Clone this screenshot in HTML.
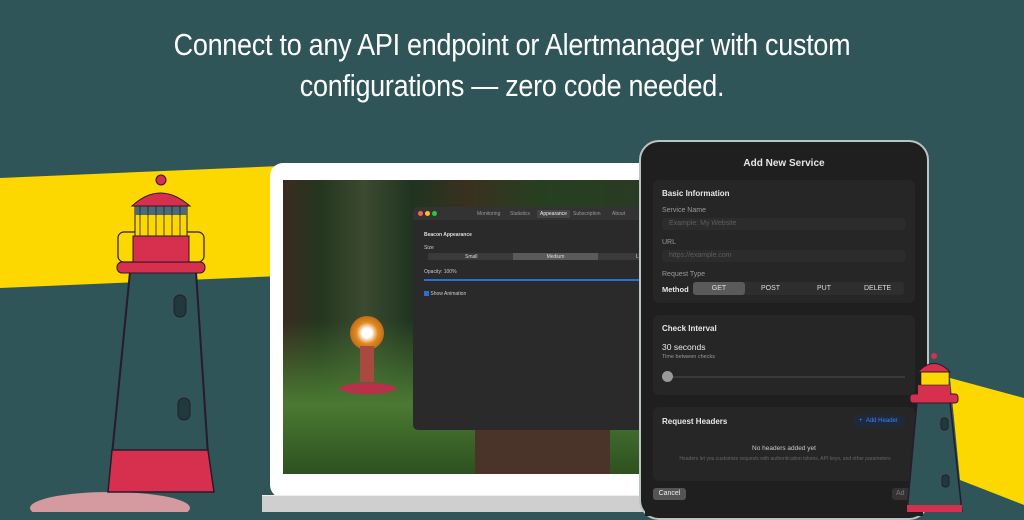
<!DOCTYPE html>
<html><head><meta charset="utf-8"><style>
*{margin:0;padding:0;box-sizing:border-box}
body{width:1024px;height:512px;overflow:hidden;background:#2f5559;font-family:"Liberation Sans",sans-serif;position:relative}
.abs{position:absolute}
.h{position:absolute;left:0;width:1024px;text-align:center;color:#fff;font-size:31px;font-weight:300;transform:scaleX(0.87);transform-origin:512px 0;letter-spacing:-0.3px}
.lbl{font-size:7px;color:#9a9a9a}
.field{background:#2c2c2c;border-radius:3px;height:12px;font-size:7px;color:#5e5e5e;padding:2px 7px}
.sec{background:#262626;border-radius:6px;position:absolute;left:653px;width:262px}
.b{font-weight:bold;color:#e8e8e8;font-size:8px}
</style></head><body>
<div class="h" style="top:27px">Connect to any API endpoint or Alertmanager with custom</div>
<div class="h" style="top:68px">configurations — zero code needed.</div>

<svg class="abs" style="left:0;top:0" width="1024" height="512">
<polygon points="0,178 280,166 280,276 0,288" fill="#fcd800"/>
<polygon points="950,378 1024,398 1024,505 960,480" fill="#fcd800"/>
<!-- left lighthouse -->
<ellipse cx="110" cy="508" rx="80" ry="16" fill="#d49aa0"/>
<polygon points="130,272 196,272 208,455 112,455" fill="#2f5559" stroke="#2a1a2a" stroke-width="2"/>
<polygon points="112,450 208,450 214,492 108,492" fill="#d6304e" stroke="#2a1a2a" stroke-width="1.5"/>
<rect x="117" y="262" width="88" height="11" rx="5" fill="#d6304e" stroke="#2a1a2a"/>
<rect x="118" y="232" width="86" height="30" rx="6" fill="none" stroke="#2a1a2a" stroke-width="1.2"/>
<rect x="133" y="236" width="56" height="26" fill="#d6304e" stroke="#2a1a2a"/>
<rect x="135" y="206" width="52" height="30" fill="#fcd800" stroke="#2a1a2a"/>
<rect x="135" y="206" width="52" height="9" fill="#4a6a78"/>
<path d="M140 206v30M148 206v30M156 206v30M164 206v30M172 206v30M180 206v30" stroke="#2a1a2a" stroke-width="0.8"/>
<path d="M132 206 Q160 180 190 206Z" fill="#d6304e" stroke="#2a1a2a"/>
<circle cx="161" cy="180" r="5" fill="#d6304e" stroke="#2a1a2a"/>
<rect x="174" y="295" width="12" height="22" rx="6" fill="#1e3a3c" stroke="#2a1a2a"/>
<rect x="178" y="398" width="12" height="22" rx="6" fill="#1e3a3c" stroke="#2a1a2a"/>
</svg>

<!-- laptop -->
<div class="abs" style="left:270px;top:163px;width:390px;height:335px;background:#fff;border-radius:13px"></div>
<div class="abs" style="left:262px;top:495px;width:400px;height:17px;background:#cfcfcf;border-top:1px solid #eee"></div>
<div class="abs" style="left:283px;top:180px;width:370px;height:294px;background:linear-gradient(90deg,#3a2a20 0%,#24361f 10%,#3b4a30 22%,#1f3420 35%,#3a3020 50%,#26401f 70%,#2a3a25 100%)"></div>
<div class="abs" style="left:283px;top:320px;width:370px;height:154px;background:linear-gradient(180deg,rgba(60,90,40,0),#4a7a32 55%,#2e5020)"></div>
<div class="abs" style="left:475px;top:430px;width:135px;height:44px;background:#4a3328"></div>
<div class="abs" style="left:350px;top:316px;width:34px;height:34px;border-radius:50%;background:radial-gradient(circle,#fff 20%,#e08a20 45%,#a04a10 100%)"></div>
<div class="abs" style="left:360px;top:346px;width:14px;height:36px;background:#a84a40"></div>
<div class="abs" style="left:340px;top:383px;width:56px;height:11px;border-radius:50%;background:#b8304a"></div>
<!-- settings window -->
<div class="abs" style="left:413px;top:207px;width:240px;height:223px;background:#2a2a2a;border-radius:5px 0 0 5px;overflow:hidden">
 <div style="height:13px;background:#333;position:relative;font-size:5px;color:#999">
  <span class="abs" style="left:5px;top:4px;width:5px;height:5px;border-radius:50%;background:#ff5f57"></span>
  <span class="abs" style="left:12px;top:4px;width:5px;height:5px;border-radius:50%;background:#febc2e"></span>
  <span class="abs" style="left:19px;top:4px;width:5px;height:5px;border-radius:50%;background:#28c840"></span>
  <span class="abs" style="left:64px;top:4px">Monitoring</span><span class="abs" style="left:97px;top:4px">Statistics</span>
  <span class="abs" style="left:124px;top:3px;background:#444;color:#eee;padding:1px 3px">Appearance</span>
  <span class="abs" style="left:160px;top:4px">Subscription</span><span class="abs" style="left:199px;top:4px">About</span>
 </div>
 <div class="abs" style="left:11px;top:25px;font-size:5px;color:#ddd;font-weight:bold">Beacon Appearance</div>
 <div class="abs" style="left:11px;top:38px;font-size:5px;color:#ccc">Size</div>
 <div class="abs" style="left:15px;top:46px;width:230px;height:7px;background:#3a3a3a;font-size:5px;color:#ddd">
  <span class="abs" style="left:37px;top:1px">Small</span>
  <span class="abs" style="left:85px;top:0;width:85px;height:7px;background:#5a5a5a;text-align:center;padding-top:1px">Medium</span>
  <span class="abs" style="left:208px;top:1px">Large</span></div>
 <div class="abs" style="left:11px;top:62px;font-size:5px;color:#ccc">Opacity: 100%</div>
 <div class="abs" style="left:11px;top:72px;width:230px;height:2px;background:#2a6fd6"></div>
 <div class="abs" style="left:11px;top:84px;font-size:5px;color:#ccc"><span style="display:inline-block;width:5px;height:5px;background:#2a6fd6;vertical-align:-1px"></span> Show Animation</div>
</div>

<!-- right panel -->
<div class="abs" style="left:639px;top:140px;width:290px;height:380px;border:2px solid #b9c4c4;border-radius:20px;background:#1e1e1e"></div>
<div class="abs" style="left:645px;top:146px;width:278px;height:370px;background:#1f1f1f;border-radius:14px 14px 0 0"></div>
<div class="abs" style="left:645px;top:158px;width:278px;text-align:center;color:#e6e6e6;font-size:10px;font-weight:bold">Add New Service</div>
<div class="sec" style="top:180px;height:123px"></div>
<div class="abs b" style="left:662px;top:189px">Basic Information</div>
<div class="abs lbl" style="left:662px;top:207px">Service Name</div>
<div class="abs field" style="left:662px;top:218px;width:243px">Example: My Website</div>
<div class="abs lbl" style="left:662px;top:239px">URL</div>
<div class="abs field" style="left:662px;top:250px;width:243px">https://example.com</div>
<div class="abs lbl" style="left:662px;top:271px">Request Type</div>
<div class="abs b" style="left:662px;top:285px;font-size:7.5px">Method</div>
<div class="abs" style="left:693px;top:282px;width:211px;height:13px;background:#2e2e2e;border-radius:3px;font-size:7px;color:#ddd">
 <span class="abs" style="left:0;top:0;width:52px;height:13px;background:#5a5a5a;border-radius:3px;text-align:center;padding-top:3px">GET</span>
 <span class="abs" style="left:68px;top:3px">POST</span><span class="abs" style="left:124px;top:3px">PUT</span><span class="abs" style="left:171px;top:3px">DELETE</span></div>
<div class="sec" style="top:315px;height:80px"></div>
<div class="abs b" style="left:662px;top:324px">Check Interval</div>
<div class="abs" style="left:662px;top:342px;color:#e8e8e8;font-size:8.5px">30 seconds</div>
<div class="abs" style="left:662px;top:354px;font-size:5.5px;color:#999">Time between checks</div>
<div class="abs" style="left:668px;top:376px;width:237px;height:2px;background:#3a3a3a"></div>
<div class="abs" style="left:662px;top:371px;width:11px;height:11px;border-radius:50%;background:#999"></div>
<div class="sec" style="top:407px;height:74px"></div>
<div class="abs b" style="left:662px;top:417px">Request Headers</div>
<div class="abs" style="left:854px;top:415px;width:51px;height:12px;background:#1e2a3c;border-radius:4px;font-size:6px;color:#3b82f6;padding:3px 0 0 5px">+ &nbsp;Add Header</div>
<div class="abs" style="left:645px;top:445px;width:278px;text-align:center;font-size:6.5px;color:#ccc">No headers added yet</div>
<div class="abs" style="left:675px;top:456px;width:220px;text-align:center;font-size:5px;color:#666;line-height:7px">Headers let you customize requests with authentication tokens, API keys, and other parameters</div>
<div class="abs" style="left:653px;top:488px;width:33px;height:12px;background:#555;border-radius:3px;font-size:7px;color:#eee;text-align:center;padding-top:2px">Cancel</div>
<div class="abs" style="left:892px;top:488px;width:20px;height:12px;background:#333;border-radius:3px 0 0 3px;font-size:7px;color:#777;padding:2px 0 0 4px">Ad</div>

<!-- right lighthouse on top -->
<svg class="abs" style="left:0;top:0" width="1024" height="512">
<polygon points="917,402 950,402 962,512 907,512" fill="#2f5559" stroke="#2a1a2a" stroke-width="1.5"/>
<rect x="910" y="394" width="48" height="9" rx="3" fill="#d6304e" stroke="#2a1a2a"/>
<rect x="918" y="385" width="32" height="10" fill="#d6304e"/>
<rect x="921" y="372" width="28" height="13" fill="#fcd800" stroke="#2a1a2a" stroke-width="0.6"/>
<path d="M918 372 Q934 355 950 372Z" fill="#d6304e" stroke="#2a1a2a"/>
<circle cx="934" cy="356" r="3" fill="#d6304e"/>
<rect x="941" y="418" width="7" height="12" rx="3" fill="#1e3a3c" stroke="#2a1a2a"/>
<rect x="942" y="475" width="7" height="12" rx="3" fill="#1e3a3c" stroke="#2a1a2a"/>
<rect x="907" y="505" width="55" height="7" fill="#d6304e"/>
</svg>
</body></html>
